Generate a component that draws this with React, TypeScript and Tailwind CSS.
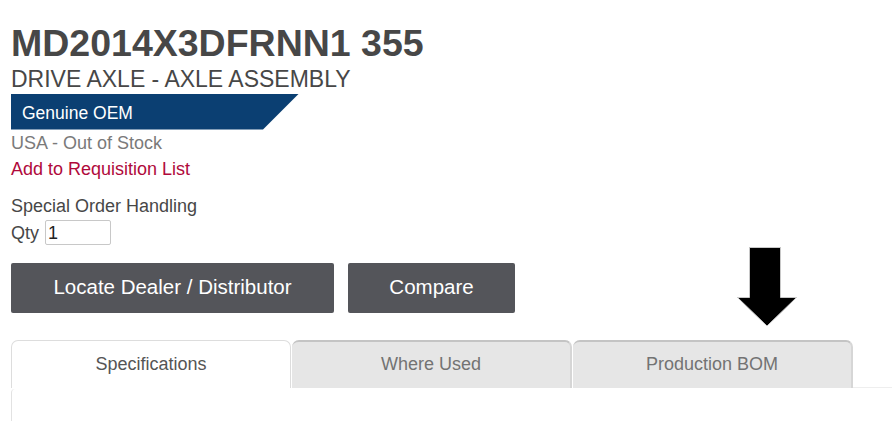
import React from 'react';

const TABS = ['Specifications', 'Where Used', 'Production BOM'];

/** Black annotation arrow pointing down at the Production BOM tab. */
function DownArrow() {
  return (
    <svg
      className="absolute left-[736px] top-[246px]"
      width="62"
      height="82"
      viewBox="0 0 62 82"
    >
      <polygon
        points="13.5,1.5 44.5,1.5 44.5,51.5 60.5,51.5 31,80 1.5,51.5 13.5,51.5"
        fill="#000"
        stroke="#c8c8c8"
        strokeWidth="1"
      />
    </svg>
  );
}

export default function App() {
  return (
    <div
      className="relative h-[421px] w-[892px] overflow-hidden bg-white pl-[11px]"
      style={{ fontFamily: '"Liberation Sans", Arial, sans-serif' }}
    >
      {/* Part header */}
      <h1 className="pt-[25px] text-[37.5px] font-bold leading-none text-[#474747]">
        MD2014X3DFRNN1 355
      </h1>
      <h2 className="mt-[5px] text-[23px] leading-none text-[#474747]">
        DRIVE AXLE - AXLE ASSEMBLY
      </h2>

      {/* Genuine OEM banner */}
      <div className="mt-[3px] h-[36px] w-[288px] bg-[#0b3f72] pl-[11px] pt-[1px] text-[17.5px] leading-[36px] text-white [clip-path:polygon(0_0,288px_0,252px_100%,0_100%)]">
        Genuine OEM
      </div>

      <div className="text-[18px] leading-[26px]">
        <div className="text-[#7a7a7a]">USA - Out of Stock</div>
        <a className="block text-[#b0093b]">Add to Requisition List</a>
        <div className="mt-[11px] text-[#474747]">Special Order Handling</div>
        <div className="mt-[1px] flex h-[26px] items-center gap-[6px] text-[#474747]">
          <span>Qty</span>
          <input
            defaultValue="1"
            className="h-[25px] w-[66px] rounded-[2px] border border-[#c8c8c8] px-[2px] text-[18px] text-[#222] outline-none"
          />
        </div>
      </div>

      {/* Actions */}
      <div className="mt-[17px] flex gap-[14px]">
        <button className="h-[50px] w-[323px] rounded-[2px] bg-[#54555a] text-[20.5px] text-white">
          Locate Dealer / Distributor
        </button>
        <button className="h-[50px] w-[167px] rounded-[2px] bg-[#54555a] text-[20.5px] text-white">
          Compare
        </button>
      </div>

      {/* Tabs */}
      <div className="mt-[27px] flex">
        {TABS.map((tab, i) =>
          i === 0 ? (
            <div
              key={tab}
              className="flex h-[48px] w-[280px] items-center justify-center rounded-t-[7px] border border-b-0 border-[#dddddd] bg-white text-[18px] text-[#555]"
            >
              {tab}
            </div>
          ) : (
            <div
              key={tab}
              className="ml-[1px] flex h-[48px] w-[280px] items-center justify-center rounded-t-[7px] border-t-2 border-r-2 border-t-[#c4c4c4] border-r-[#d6d6d6] bg-[#e6e6e6] text-[18px] text-[#737373]"
            >
              {tab}
            </div>
          )
        )}
        <div className="flex-1 border-b border-[#eeeeee]" />
      </div>
      <div className="mt-[1px] h-[40px] rounded-tl-[4px] border-l border-[#e2e2e2]" />

      <DownArrow />
    </div>
  );
}
